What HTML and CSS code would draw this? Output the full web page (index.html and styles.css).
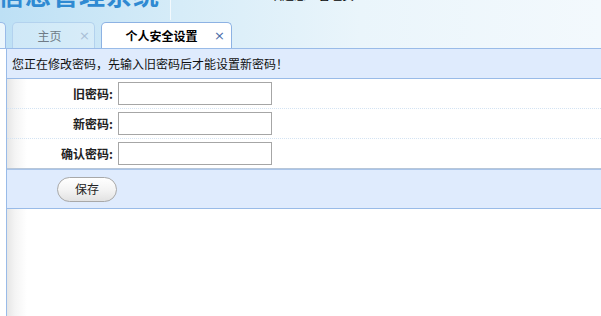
FILE: index.html
```html
<!DOCTYPE html>
<html lang="zh-CN">
<head>
<meta charset="utf-8">
<title>个人安全设置</title>
<link rel="stylesheet" href="styles.css">
</head>
<body>
<div class="header">
  <div class="brand">
    <span class="title">监察信息管理系统</span>
    <span class="sep"></span>
    <span class="user">欢迎您：管理员</span>
  </div>
  <div class="tabs">
    <div class="tab tab-stub"></div>
    <div class="tab tab-home"><span class="tab-text">主页</span><span class="tab-close">×</span></div>
    <div class="tab tab-active"><span class="tab-text">个人安全设置</span><span class="tab-close">×</span></div>
  </div>
</div>
<div class="main">
  <div class="notice">您正在修改密码，先输入旧密码后才能设置新密码！</div>
  <div class="form">
    <div class="row"><label class="label">旧密码:</label><input class="field" type="password"></div>
    <div class="row"><label class="label">新密码:</label><input class="field" type="password"></div>
    <div class="row"><label class="label">确认密码:</label><input class="field" type="password"></div>
  </div>
  <div class="actions"><button class="btn" type="button">保存</button></div>
  <div class="rest"></div>
</div>
</body>
</html>
```

FILE: styles.css
```css
* { box-sizing: border-box; }
html, body { margin: 0; padding: 0; height: 100%; }
body {
  font-family: "Noto Sans CJK SC", "Liberation Sans", sans-serif;
  font-size: 12px;
  color: #000;
  background: #fff;
  overflow: hidden;
}
.header {
  height: 49px;
  background: linear-gradient(to right, #bde0f5 0%, #d6ecf8 30%, #eaf5fb 60%, #f3f9fd 100%);
  border-bottom: 1px solid #99bbe8;
  display: flex;
  flex-direction: column;
  justify-content: space-between;
  overflow: hidden;
}
.brand {
  display: flex;
  height: 20px;
  overflow: hidden;
}
.title {
  font-size: 26px;
  font-weight: bold;
  color: #2f8ad2;
  line-height: 30px;
  margin-top: -21px;
  margin-left: -80px;
  width: 250px;
  white-space: nowrap;
  letter-spacing: 1px;
  text-align: right;
  flex-shrink: 0;
  padding-right: 10px;
}
.sep {
  width: 1px;
  height: 20px;
  background: rgba(255,255,255,0.7);
  flex-shrink: 0;
}
.user {
  margin-top: -12px;
  margin-left: 99px;
  font-size: 12px;
  line-height: 14px;
  height: 14px;
  color: #000;
  white-space: nowrap;
}
.tabs {
  display: flex;
  align-items: flex-end;
  gap: 6px;
  height: 26px;
}
.tab {
  height: 26px;
  border: 1px solid #99bbe8;
  border-bottom: none;
  border-radius: 5px 5px 0 0;
  display: flex;
  align-items: center;
  position: relative;
}
.tab-stub {
  width: 7px;
  margin-left: -1px;
  background: rgba(255,255,255,0.7);
  border-left: none;
  border-radius: 0 5px 0 0;
}
.tab-home {
  width: 83px;
  background: rgba(255,255,255,0.25);
  border-color: #b3d2ee;
  color: #6f7b86;
  justify-content: center;
}
.tab-active {
  width: 131px;
  background: #fff;
  border-color: #8db2e3;
  font-weight: bold;
  justify-content: center;
}
.tab-text { line-height: 14px; }
.tab-home .tab-text { margin-right: 8px; }
.tab-active .tab-text { margin-right: 10px; }
.tab-close {
  position: absolute;
  right: 4px;
  top: 6px;
  font-size: 13px;
  line-height: 13px;
  font-weight: normal;
  font-family: "DejaVu Sans", sans-serif;
  color: #a9bfd6;
}
.tab-active .tab-close { color: #4a6ea8; right: 6px; }
.main {
  margin-left: 6px;
  border-left: 1px solid #99bbe8;
  height: calc(100% - 49px);
  background: linear-gradient(to right, #e6e6e6 0px, #f4f4f4 8px, #ffffff 20px);
  display: flex;
  flex-direction: column;
}
.notice {
  height: 30px;
  background: #dfebfd;
  border-bottom: 1px solid #99bbe8;
  padding-left: 5px;
  display: flex;
  align-items: center;
  line-height: 14px;
  color: #111;
}
.form { display: flex; flex-direction: column; }
.row {
  height: 30px;
  display: flex;
  align-items: center;
  gap: 5px;
  border-bottom: 1px dotted #d3e3f3;
}
.row:last-child { height: 30px; border-bottom: 1px solid #b7c6d9; }
.label {
  width: 106px;
  text-align: right;
  font-weight: bold;
  color: #222;
  line-height: 14px;
}
.field {
  width: 154px;
  height: 23px;
  margin: 0;
  border: 1px solid #a6a6a6;
  background: #fff;
  padding: 0 3px;
  font-size: 12px;
}
.actions {
  height: 40px;
  background: #dfebfd;
  border-top: 1px solid #a9c4e8;
  border-bottom: 1px solid #99bbe8;
  display: flex;
  align-items: center;
  padding-left: 50px;
}
.btn {
  width: 60px;
  height: 25px;
  border: 1px solid #a8a8a8;
  border-radius: 13px;
  background: linear-gradient(to bottom, #ffffff 0%, #f4f4f4 50%, #e2e2e2 100%);
  font-family: "Noto Sans CJK SC", sans-serif;
  font-size: 12px;
  color: #222;
  padding: 0;
  line-height: 14px;
}
.rest { flex: 1; }
```
